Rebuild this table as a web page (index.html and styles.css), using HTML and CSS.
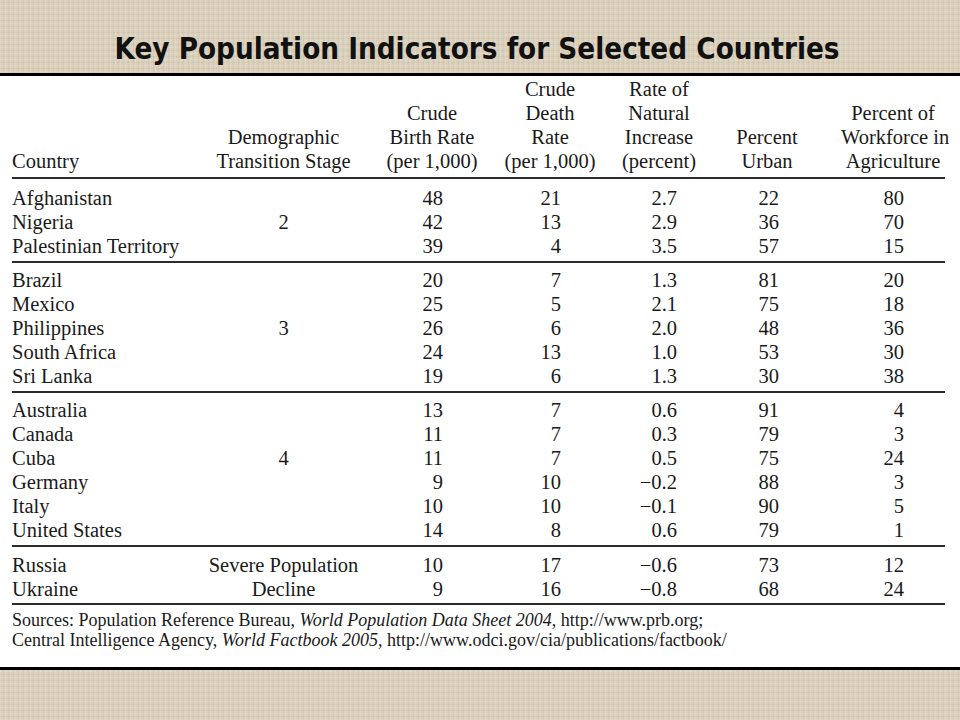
FILE: index.html
```html
<!DOCTYPE html>
<html lang="en">
<head>
<meta charset="utf-8">
<title>Key Population Indicators for Selected Countries</title>
<link rel="stylesheet" href="styles.css">
</head>
<body>
<header class="title-bar">
  <h1 class="title">Key Population Indicators for Selected Countries</h1>
</header>
<main class="panel">
  <table class="data">
    <colgroup>
      <col class="c1"><col class="c2"><col class="c3"><col class="c4"><col class="c5"><col class="c6"><col class="c7">
    </colgroup>
    <thead>
      <tr>
        <th class="h-left">Country</th>
        <th>Demographic<br>Transition Stage</th>
        <th>Crude<br>Birth Rate<br>(per 1,000)</th>
        <th>Crude<br>Death<br>Rate<br>(per 1,000)</th>
        <th>Rate of<br>Natural<br>Increase<br>(percent)</th>
        <th>Percent<br>Urban</th>
        <th class="h-last">Percent of<br>Workforce in<br>Agriculture</th>
      </tr>
    </thead>
    <tbody class="g1">
      <tr class="first"><td>Afghanistan</td><td class="stage"></td><td class="n3">48</td><td class="n4">21</td><td class="n5">2.7</td><td class="n6">22</td><td class="n7">80</td></tr>
      <tr><td>Nigeria</td><td class="stage">2</td><td class="n3">42</td><td class="n4">13</td><td class="n5">2.9</td><td class="n6">36</td><td class="n7">70</td></tr>
      <tr class="last"><td>Palestinian Territory</td><td class="stage"></td><td class="n3">39</td><td class="n4">4</td><td class="n5">3.5</td><td class="n6">57</td><td class="n7">15</td></tr>
    </tbody>
    <tbody>
      <tr class="first"><td>Brazil</td><td class="stage"></td><td class="n3">20</td><td class="n4">7</td><td class="n5">1.3</td><td class="n6">81</td><td class="n7">20</td></tr>
      <tr><td>Mexico</td><td class="stage"></td><td class="n3">25</td><td class="n4">5</td><td class="n5">2.1</td><td class="n6">75</td><td class="n7">18</td></tr>
      <tr><td>Philippines</td><td class="stage">3</td><td class="n3">26</td><td class="n4">6</td><td class="n5">2.0</td><td class="n6">48</td><td class="n7">36</td></tr>
      <tr><td>South Africa</td><td class="stage"></td><td class="n3">24</td><td class="n4">13</td><td class="n5">1.0</td><td class="n6">53</td><td class="n7">30</td></tr>
      <tr class="last"><td>Sri Lanka</td><td class="stage"></td><td class="n3">19</td><td class="n4">6</td><td class="n5">1.3</td><td class="n6">30</td><td class="n7">38</td></tr>
    </tbody>
    <tbody>
      <tr class="first"><td>Australia</td><td class="stage"></td><td class="n3">13</td><td class="n4">7</td><td class="n5">0.6</td><td class="n6">91</td><td class="n7">4</td></tr>
      <tr><td>Canada</td><td class="stage"></td><td class="n3">11</td><td class="n4">7</td><td class="n5">0.3</td><td class="n6">79</td><td class="n7">3</td></tr>
      <tr><td>Cuba</td><td class="stage">4</td><td class="n3">11</td><td class="n4">7</td><td class="n5">0.5</td><td class="n6">75</td><td class="n7">24</td></tr>
      <tr><td>Germany</td><td class="stage"></td><td class="n3">9</td><td class="n4">10</td><td class="n5">&minus;0.2</td><td class="n6">88</td><td class="n7">3</td></tr>
      <tr><td>Italy</td><td class="stage"></td><td class="n3">10</td><td class="n4">10</td><td class="n5">&minus;0.1</td><td class="n6">90</td><td class="n7">5</td></tr>
      <tr class="last"><td>United States</td><td class="stage"></td><td class="n3">14</td><td class="n4">8</td><td class="n5">0.6</td><td class="n6">79</td><td class="n7">1</td></tr>
    </tbody>
    <tbody class="g4">
      <tr class="first"><td>Russia</td><td class="stage">Severe Population</td><td class="n3">10</td><td class="n4">17</td><td class="n5">&minus;0.6</td><td class="n6">73</td><td class="n7">12</td></tr>
      <tr class="last"><td>Ukraine</td><td class="stage">Decline</td><td class="n3">9</td><td class="n4">16</td><td class="n5">&minus;0.8</td><td class="n6">68</td><td class="n7">24</td></tr>
    </tbody>
  </table>
  <p class="sources">Sources: Population Reference Bureau, <em>World Population Data Sheet 2004</em>, http://www.prb.org;<br>Central Intelligence Agency, <em>World Factbook 2005</em>, http://www.odci.gov/cia/publications/factbook/</p>
</main>
</body>
</html>
```
FILE: styles.css
```css
html, body {
  margin: 0;
  padding: 0;
}
body {
  width: 960px;
  height: 720px;
  overflow: hidden;
  background-color: #dad0bc;
  background-image:
    repeating-linear-gradient(90deg, rgba(255,255,255,0.12) 0 1px, transparent 1px 3px, rgba(110,90,60,0.06) 3px 4px, transparent 4px 5px),
    repeating-linear-gradient(0deg, rgba(255,255,255,0.10) 0 1px, transparent 1px 3px, rgba(110,90,60,0.06) 3px 4px, transparent 4px 6px);
}
.title-bar {
  height: 73px;
  box-sizing: border-box;
  padding: 33px 6px 0 0;
  display: flex;
  justify-content: center;
}
.title {
  margin: 0;
  font-family: "DejaVu Sans Condensed", "DejaVu Sans", sans-serif;
  font-stretch: condensed;
  font-weight: bold;
  font-size: 29.3px;
  line-height: 32px;
  color: #111;
}
.panel {
  height: 597px;
  box-sizing: border-box;
  border-top: 3px solid #000;
  border-bottom: 3px solid #000;
  background: #fff;
  padding: 1px 0 0 12px;
  font-family: "Liberation Serif", "Times New Roman", serif;
  color: #1a1a1a;
}
.data {
  border-collapse: collapse;
  table-layout: fixed;
  width: 933px;
  font-size: 20.5px;
  line-height: 24px;
}
.c1 { width: 194px; }
.c2 { width: 155px; }
.c3 { width: 142px; }
.c4 { width: 94px; }
.c5 { width: 124px; }
.c6 { width: 92px; }
.c7 { width: 132px; }
.data th {
  font-weight: normal;
  text-align: center;
  vertical-align: bottom;
  padding: 0 0 4px 0;
  white-space: nowrap;
}
.data th.h-left { text-align: left; }
.data th.h-last { padding-left: 28px; }
.data thead { border-bottom: 2px solid #2b2b2b; }
.data tbody { border-bottom: 2px solid #2b2b2b; }
.data td {
  padding: 0;
  white-space: nowrap;
}
.data tr.first td { padding-top: 5px; }
.data tr.last td { padding-bottom: 3px; }
.data tbody.g1 tr.first td { padding-top: 7px; }
.data tbody.g4 tr.first td { padding-top: 6px; }
.data tbody.g4 tr.last td { padding-bottom: 2px; }
.stage { text-align: center; }
.n3, .n4, .n5, .n6, .n7 { text-align: right; }
.n3 { padding-right: 60px !important; }
.n4 { padding-right: 36px !important; }
.n5 { padding-right: 44px !important; }
.n6 { padding-right: 34px !important; }
.n7 { padding-right: 41px !important; }
.sources {
  margin: 5px 0 0 0;
  font-size: 18px;
  line-height: 20px;
}
.sources em { font-style: italic; }
```
